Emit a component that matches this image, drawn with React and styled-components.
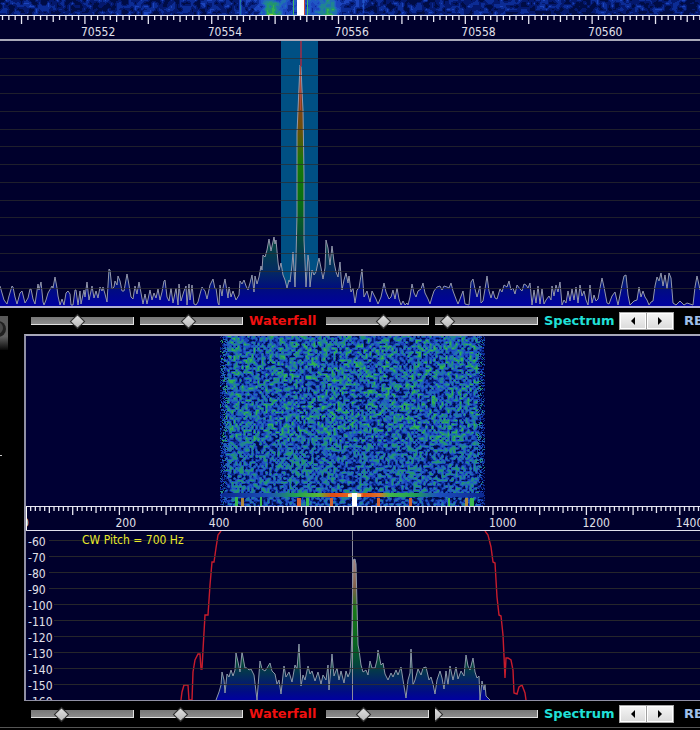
import React, { useState } from "react";
import styled, { createGlobalStyle } from "styled-components";

const GlobalStyle = createGlobalStyle`
  body {
    margin: 0;
    background-color: #000;
    overflow-x: hidden;
  }
`;

const labelFont = `"DejaVu Sans Condensed", "DejaVu Sans", sans-serif`;

const Receiver = styled.main`
  display: flex;
  flex-direction: column;
  overflow: hidden;
  background-color: #000;
  font-family: ${labelFont};
  font-size: 12px;
`;

const Drawing = styled.svg`
  display: block;
  width: 100%;
  height: ${(props) => props.$height}px;
  background-color: ${(props) => props.$background || "#00002c"};
`;

const RulerDrawing = styled(Drawing)`
  border-bottom: ${(props) => props.$border}px solid ${(props) => (props.$border > 1 ? "#a8a8b8" : "#e0e0ec")};
`;

const MainSpectrum = styled.section`
  border-bottom: 2px solid #b0b0d4;
`;

const Lower = styled.div`
  display: flex;
`;

const Rail = styled.div`
  flex: 0 0 24px;
`;

const Audio = styled.div`
  flex: 1;
  min-width: 0;
`;

const AudioPanel = styled.section`
  border: 2px solid #9090a4;
  border-top-color: #a8a8b8;
  border-right: none;
  border-bottom-width: 1px;
`;

const Toolbar = styled.div`
  display: flex;
  align-items: center;
  height: 26px;
  padding-left: 7px;
  overflow: hidden;
  white-space: nowrap;
`;

const BottomEdge = styled.div`
  border-top: 1px solid #555;
  height: 2px;
`;

const SliderBox = styled.label`
  flex: 0 0 103px;
  display: flex;
  align-items: center;
  height: 16px;
  margin-right: 6px;
  overflow: hidden;
  background: linear-gradient(#787878, #8c8c8c) no-repeat 0 4px / 102px 7px,
    linear-gradient(#e0e0e0, #e0e0e0) no-repeat 0 4px / 103px 8px;
`;

const SliderInput = styled.input`
  flex: none;
  appearance: none;
  width: calc(100% + 11px);
  height: 16px;
  margin: 0 0 0 -5px;
  background: transparent;
  outline: none;

  &::-webkit-slider-thumb {
    appearance: none;
    box-sizing: border-box;
    width: 11px;
    height: 11px;
    border: 1px solid #303030;
    background: linear-gradient(135deg, #e0e0e0, #b8b8b8);
    transform: rotate(45deg);
  }
`;

const GroupLabel = styled.span`
  flex: 0 0 ${(props) => props.$width}px;
  color: ${(props) => props.$color};
  font-family: "DejaVu Sans", Verdana, sans-serif;
  font-size: 13px;
  font-weight: bold;
  line-height: 18px;
`;

const Stepper = styled.div`
  flex: 0 0 55px;
  box-sizing: border-box;
  display: flex;
  gap: 1px;
  height: 18px;
  margin-right: 10px;
  border: 1px solid #a8a8a8;
  background-color: #a0a0a0;
`;

const StepButton = styled.button`
  flex: 1;
  display: flex;
  align-items: center;
  justify-content: center;
  padding: 0;
  border: 1px solid #fff;
  background: linear-gradient(#f4f4f4, #dcdcdc);
`;

const makeRandom = (seed) => () => {
  seed = (seed + 0x6d2b79f5) | 0;
  let t = Math.imul(seed ^ (seed >>> 15), 1 | seed);
  t = (t + Math.imul(t ^ (t >>> 7), 61 | t)) ^ t;
  return ((t ^ (t >>> 14)) >>> 0) / 4294967296;
};

const palette = [
  "#000c44",
  "#04186c",
  "#0c2c94",
  "#1c44bc",
  "#2058c4",
  "#2070b0",
  "#208494",
  "#229470",
  "#30b050",
  "#8cc83c",
  "#e07828",
];

// one path per palette colour, neighbouring pixels of a colour joined in runs
const makeNoise = (seed, left, top, width, height, cell, level) => {
  const random = makeRandom(seed);
  const cols = Math.ceil(width / cell) + 2;
  const rows = Math.ceil(height / cell) + 2;
  const grid = Array.from({ length: cols * rows }, random);
  const paths = palette.map(() => "");
  for (let y = 0; y < height; y++) {
    let start = 0;
    let last = -1;
    for (let x = 0; x <= width; x++) {
      let color = -1;
      if (x < width) {
        const gx = Math.floor(x / cell);
        const gy = Math.floor(y / cell);
        const fx = x / cell - gx;
        const fy = y / cell - gy;
        const at = gy * cols + gx;
        const value =
          (grid[at] * (1 - fx) + grid[at + 1] * fx) * (1 - fy) +
          (grid[at + cols] * (1 - fx) + grid[at + cols + 1] * fx) * fy;
        const found = Math.floor(level(left + x, top + y, value, random));
        color = Math.min(found, palette.length - 1);
      }
      if (color !== last) {
        if (last >= 0) {
          paths[last] += `M${left + start} ${top + y}h${x - start}v1h${start - x}z`;
        }
        start = x;
        last = color;
      }
    }
  }
  return paths;
};

const bump = (x, center, spread) => Math.exp(-(((x - center) / spread) ** 2));

const stripNoise = makeNoise(7, 0, 0, 700, 15, 3, (x, y, v) => {
  const glow = bump(x, 300, 44) * 2.4;
  const hot =
    (bump(x, 271, 9) + bump(x, 329, 9) * 0.9) * (3.2 + y * 0.2) +
    bump(x, 240, 1) * 4 +
    bump(x, 363, 1) * 2;
  return Math.max(0, v * 3.8 - 0.4 + glow + hot);
});

const audioNoise = makeNoise(21, 218, 336, 268, 170, 2, (x, y, v, random) => {
  const edge = Math.min(x - 219, 485 - x);
  if (edge < random() * 9) return edge > 0 && random() > 0.6 ? 2 : -1;
  const body = Math.min(8, v * 9.6 - 0.2 + (random() - 0.5) * 0.6);
  return Math.max(0, y > 495 ? body - 1.4 : body - (y > 440 ? 0.4 : 0));
});

const mainTrace =
  "0,286 2,293 4,300 7,304 9,296 12,286 13,287 15,297 17,304 20,293 22,291 25,303 28,298 30,289 31,289 33,299 35,304 38,284 39,290 41,282 43,302 44,305 46,300 48,293 52,286 53,288 55,277 57,288 58,296 60,305 62,299 64,305 66,293 68,291 70,294 71,305 73,305 75,290 76,290 78,305 80,291 81,304 84,290 85,297 87,282 89,300 91,291 92,286 94,298 96,291 98,298 100,287 102,291 103,287 105,294 107,302 109,269 110,270 112,289 114,287 115,281 117,285 118,276 120,281 122,291 124,291 127,274 129,285 131,297 133,299 135,286 137,294 139,282 141,293 143,304 145,294 147,304 150,290 152,300 154,293 156,298 158,289 160,300 162,292 164,281 165,280 167,297 169,301 171,288 173,303 176,288 178,305 179,284 181,301 184,291 186,286 187,305 189,284 190,300 192,285 194,304 196,305 198,302 200,294 202,287 205,291 207,299 210,285 213,279 215,289 216,288 218,303 219,305 220,285 222,296 223,288 225,279 228,298 229,287 231,297 233,291 236,300 239,295 240,281 242,284 244,280 246,286 248,290 250,283 252,275 254,292 255,276 257,284 259,277 261,266 262,270 263,255 265,257 267,250 269,239 271,251 274,237 275,244 276,240 278,262 279,270 281,263 283,275 285,280 287,288 289,280 290,282 292,265 293,252 294,270 295,287 296,258 297,215 297,133 299,87 300,65 301,67 302,90 303,110 304,175 304,240 305,262 306,287 308,255 309,262 310,287 312,270 314,275 316,272 318,262 319,258 321,268 323,279 325,268 326,240 328,248 330,265 332,246 334,262 336,272 338,277 340,262 342,290 344,280 346,273 348,283 349,276 351,292 353,288 355,303 357,290 359,288 362,269 364,297 367,291 370,302 372,291 376,299 378,304 381,297 384,283 386,292 389,299 391,297 393,290 395,299 397,288 399,299 401,305 403,301 405,305 407,303 408,305 410,297 412,284 414,293 416,297 418,291 421,289 423,283 425,293 428,299 430,304 432,297 434,291 437,287 440,286 442,290 444,286 447,287 449,288 451,283 453,291 456,299 458,304 460,299 463,291 465,304 469,305 471,282 473,279 475,289 477,297 480,286 481,303 483,301 485,289 487,276 489,291 491,298 493,291 495,298 497,299 500,289 502,292 504,285 507,287 509,281 511,290 513,288 515,294 517,285 520,289 522,291 524,284 526,285 528,288 530,283 532,305 534,290 536,303 538,286 540,304 542,289 544,304 546,300 549,296 551,300 552,286 554,296 556,285 558,292 560,282 562,305 564,300 566,303 568,291 570,301 572,289 574,300 576,287 578,303 580,285 582,296 584,291 586,300 588,305 590,285 592,303 594,295 596,301 598,299 600,288 602,278 604,287 607,303 609,304 612,296 615,292 618,305 620,295 622,285 624,276 626,275 628,295 630,305 634,301 637,300 639,287 641,297 643,291 645,297 647,300 649,305 651,302 653,301 655,286 657,277 659,281 661,273 663,286 665,275 667,289 669,273 671,278 673,303 676,305 680,301 684,305 687,303 690,304 693,305 695,287 697,276 699,285 700,290";

const audioTrace =
  "216,700 219,692 221,685 222,672 224,680 225,693 227,674 229,677 231,670 233,676 235,670 236,653 238,662 240,672 242,652 245,668 247,668 249,670 251,669 254,675 257,700 260,661 262,669 265,671 267,668 270,663 272,671 275,674 277,684 279,680 281,694 284,666 286,677 289,672 292,682 295,665 297,669 299,644 301,686 303,675 305,680 308,666 310,674 312,671 315,681 318,672 321,684 323,675 326,680 328,665 329,690 332,654 334,676 337,668 339,680 341,671 344,683 346,671 348,677 350,672 351,658 352,627 353,560 355,559 356,564 357,605 358,645 359,650 361,665 363,672 366,670 368,675 370,661 372,668 375,668 377,660 378,650 381,665 383,663 385,674 388,680 391,673 393,677 396,670 398,675 401,667 403,680 406,698 408,680 410,673 411,649 413,685 415,680 418,669 421,675 423,668 426,667 429,680 431,677 433,684 435,694 437,680 440,671 442,678 444,689 446,671 448,685 450,666 453,680 456,667 458,679 461,671 464,676 466,655 468,666 470,670 473,658 475,672 477,678 479,676 480,700 482,681 484,690 485,684 486,696 490,700";

const filterLeft =
  "221,531 218,535 216,548 214,562 212,562 210,585 208,615 205,615 203,650 202,669 201,669 200,654 198,654 195,660 193,672 192,700 189,700 188,685 184,685 182,692 181,700";
const filterRight =
  "485,531 488,535 491,547 493,562 495,563 497,597 499,615 501,616 503,635 504,656 505,678 506,658 508,658 511,660 513,670 514,693 517,694 519,687 522,685 525,693 526,700";

const mainLabels = [70552, 70554, 70556, 70558, 70560];
const audioLabels = [0, 200, 400, 600, 800, 1000, 1200, 1400];
const levels = [-60, -70, -80, -90, -100, -110, -120, -130, -140, -150, -160];

const mainSliders = [45, 47, 55, 12];
const audioSliders = [29, 39, 36, 0];

const count = (length) => Array.from({ length }, (_, i) => i);

function Noise({ paths }) {
  return (
    <g shapeRendering="crispEdges">
      {paths.map((d, i) => (
        <path key={i} d={d} fill={palette[i]} />
      ))}
    </g>
  );
}

function Ruler({ name, width, offset, step, ticks, first, labels, border, children }) {
  const place = (x) => `${(x / width) * 100}%`;
  return (
    <RulerDrawing $height={24} $border={border} role="img" aria-label={name}>
      <rect width="100%" height="1" fill="#e8e8f4" />
      {count(ticks).map((i) => {
        const x = place(offset + i * step);
        const mark = i - first;
        const length = mark % 10 === 0 ? 9 : mark % 5 === 0 ? 7 : 5;
        return (
          <line
            key={i}
            x1={x}
            x2={x}
            y1="0"
            y2={length}
            stroke="#e8e8f4"
            strokeWidth="1.3"
          />
        );
      })}
      {labels.map((label, i) => (
        <text
          key={label}
          x={place(offset + step * (first + i * 20) - 4)}
          y="21"
          fill="#e0e0ea"
        >
          {label}
        </text>
      ))}
      {children}
    </RulerDrawing>
  );
}

function Slider({ name, initial }) {
  const [value, setValue] = useState(initial);
  return (
    <SliderBox>
      <SliderInput
        type="range"
        aria-label={name}
        value={value}
        onChange={(e) => setValue(Number(e.target.value))}
      />
    </SliderBox>
  );
}

function Controls({ name, values }) {
  return (
    <Toolbar>
      <Slider name={`${name} waterfall low`} initial={values[0]} />
      <Slider name={`${name} waterfall high`} initial={values[1]} />
      <GroupLabel $width={77} $color="#f01010">
        Waterfall
      </GroupLabel>
      <Slider name={`${name} spectrum low`} initial={values[2]} />
      <Slider name={`${name} spectrum high`} initial={values[3]} />
      <GroupLabel $width={75} $color="#20e0d8">
        Spectrum
      </GroupLabel>
      <Stepper>
        <StepButton type="button" aria-label={`${name} previous`}>
          <svg width="4" height="8">
            <path d="M4 0v8L0 4z" fill="#000" />
          </svg>
        </StepButton>
        <StepButton type="button" aria-label={`${name} next`}>
          <svg width="4" height="8">
            <path d="M0 0v8l4-4z" fill="#000" />
          </svg>
        </StepButton>
      </Stepper>
      <GroupLabel $width={32} $color="#a0c0e8">
        RB
      </GroupLabel>
    </Toolbar>
  );
}

function MainPlot() {
  return (
    <MainSpectrum>
      <Drawing
        $height={265}
        viewBox="0 41 700 265"
        preserveAspectRatio="none"
        role="img"
        aria-label="Main spectrum"
      >
        <defs>
          <linearGradient id="mainFill" gradientUnits="userSpaceOnUse" x1="0" x2="0" y1="65" y2="306">
            <stop offset="0" stopColor="#a07070" />
            <stop offset="0.12" stopColor="#8c3c20" />
            <stop offset="0.27" stopColor="#6c5008" />
            <stop offset="0.4" stopColor="#187808" />
            <stop offset="0.56" stopColor="#087010" />
            <stop offset="0.72" stopColor="#04483c" />
            <stop offset="0.85" stopColor="#042c60" />
            <stop offset="0.93" stopColor="#000c80" />
            <stop offset="1" stopColor="#0000a0" />
          </linearGradient>
        </defs>
        <rect x="281" y="41" width="37" height="265" fill="#005084" />
        <polygon points={`0,306 ${mainTrace} 700,306`} fill="url(#mainFill)" />
        <polyline points={mainTrace} fill="none" stroke="#9498ac" />
        <rect x="300" y="41" width="2" height="25" fill="#7c3454" />
        <rect x="300" y="66" width="1" height="44" fill="#b04838" />
        {count(14).map((i) => (
          <rect
            key={i}
            y={Math.round(57.5 + i * 17.75)}
            width="700"
            height="1"
            fill="rgba(44, 44, 44, 0.7)"
          />
        ))}
      </Drawing>
    </MainSpectrum>
  );
}

function AudioWaterfall() {
  return (
    <Drawing
      $height={170}
      $background="#000034"
      viewBox="26 336 674 170"
      preserveAspectRatio="none"
      role="img"
      aria-label="Audio waterfall"
    >
      <defs>
        <linearGradient id="streak" gradientUnits="userSpaceOnUse" x1="222" x2="484" y1="0" y2="0">
          <stop offset="0" stopColor="#0c2890" />
          <stop offset="0.18" stopColor="#1c50b8" />
          <stop offset="0.28" stopColor="#20a050" />
          <stop offset="0.37" stopColor="#58b838" />
          <stop offset="0.42" stopColor="#e04810" />
          <stop offset="0.48" stopColor="#e86020" />
          <stop offset="0.505" stopColor="#fff" />
          <stop offset="0.54" stopColor="#e04c10" />
          <stop offset="0.6" stopColor="#e07028" />
          <stop offset="0.64" stopColor="#40b848" />
          <stop offset="0.74" stopColor="#209c58" />
          <stop offset="0.82" stopColor="#1c50c0" />
          <stop offset="1" stopColor="#0c2890" />
        </linearGradient>
      </defs>
      <Noise paths={audioNoise} />
      <rect x="222" y="493" width="262" height="4" fill="url(#streak)" />
      <path
        d="M235 497h3v9h-3zM260 497h2v9h-2zM306 498h3v8h-3zM448 498h2v8h-2zM470 498h4v8h-4z"
        fill="#38b850"
      />
      <path d="M330 498h3v8h-3zM297 498h4v8h-4zM409 498h3v8h-3zM377 498h3v8h-3z" fill="#d06030" />
      <path d="M241 498h3v8h-3zM465 498h3v8h-3z" fill="#b0883c" />
      <path d="M348 494h13v3h-13z" fill="#f8e090" />
      <rect x="352" y="493" width="5" height="13" fill="#fff" />
    </Drawing>
  );
}

function AudioPlot() {
  return (
    <Drawing $height={169} role="img" aria-label="Audio spectrum">
      <svg viewBox="26 531 674 169" preserveAspectRatio="none" width="100%" height="169">
        <defs>
          <linearGradient id="audioFill" gradientUnits="userSpaceOnUse" x1="0" x2="0" y1="559" y2="700">
            <stop offset="0" stopColor="#a88484" />
            <stop offset="0.2" stopColor="#806048" />
            <stop offset="0.36" stopColor="#187818" />
            <stop offset="0.6" stopColor="#086420" />
            <stop offset="0.75" stopColor="#04443c" />
            <stop offset="0.86" stopColor="#042464" />
            <stop offset="0.94" stopColor="#000c84" />
            <stop offset="1" stopColor="#0000a0" />
          </linearGradient>
        </defs>
        <polygon points={audioTrace} fill="url(#audioFill)" />
        <polyline points={audioTrace} fill="none" stroke="#8c98a8" />
        <rect x="352" y="531" width="1" height="169" fill="#8c8c9c" />
        <polyline points={filterLeft} fill="none" stroke="#c81c2c" strokeWidth="1.4" />
        <polyline points={filterRight} fill="none" stroke="#c81c2c" strokeWidth="1.4" />
        {count(10).map((i) => (
          <rect
            key={i}
            x={i < 4 ? 49 : 54}
            y={Math.round(539.5 + i * 16.1)}
            width="651"
            height="1"
            fill="rgba(48, 48, 44, 0.8)"
          />
        ))}
      </svg>
      {levels.map((level, i) => (
        <text key={level} x="2" y={15 + i * 16} fill="#e0e0ea">
          {level}
        </text>
      ))}
      <text x="56" y="13" fill="#e8e82c">
        CW Pitch = 700 Hz
      </text>
    </Drawing>
  );
}

function RailMarks() {
  return (
    <svg width="24" height="160" aria-hidden="true">
      <defs>
        <linearGradient id="knob" x1="0" x2="0" y1="0" y2="1">
          <stop offset="0" stopColor="#585858" />
          <stop offset="0.6" stopColor="#606060" />
          <stop offset="1" stopColor="#080808" />
        </linearGradient>
      </defs>
      <rect y="8" width="8" height="34" fill="url(#knob)" />
      <circle cx="-2" cy="21" r="8" fill="#202020" />
      <circle cx="-3" cy="20" r="6" fill="#484848" />
      <rect y="147" width="2" height="1" fill="#c8c8c8" />
    </svg>
  );
}

function App() {
  return (
    <Receiver>
      <GlobalStyle />
      <Drawing
        $height={15}
        viewBox="0 0 700 15"
        preserveAspectRatio="none"
        role="img"
        aria-label="Main waterfall"
      >
        <Noise paths={stripNoise} />
        <path d="M293 0h1v15h-1zM307 0h1v15h-1z" fill="#40b868" />
        <rect x="297" width="7" height="15" fill="#fff" />
        <rect x="304" width="1" height="15" fill="#d04838" />
      </Drawing>
      <Ruler
        name="Frequency scale"
        width={700}
        offset={2.5}
        step={6.34}
        ticks={111}
        first={13}
        labels={mainLabels}
        border={2}
      />
      <MainPlot />
      <Lower>
        <Rail>
          <RailMarks />
        </Rail>
        <Audio>
          <Controls name="Main" values={mainSliders} />
          <AudioPanel>
            <AudioWaterfall />
            <Ruler
              name="Audio scale"
              width={674}
              offset={0}
              step={4.67}
              ticks={145}
              first={0}
              labels={audioLabels}
              border={1}
            >
              <rect width="1" height="24" fill="#fff" />
            </Ruler>
            <AudioPlot />
          </AudioPanel>
          <Controls name="Audio" values={audioSliders} />
        </Audio>
      </Lower>
      <BottomEdge />
    </Receiver>
  );
}

export default App;
